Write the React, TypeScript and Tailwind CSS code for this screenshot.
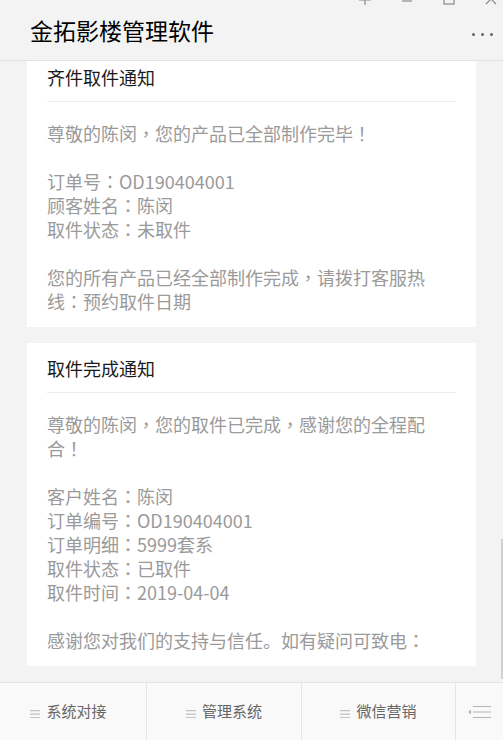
import type { ReactNode } from 'react';

const FONT = { fontFamily: '"Microsoft YaHei", "Noto Sans CJK SC", sans-serif' };

/** Full-width punctuation sits centred in the reference, so borrow the TC glyphs for it. */
function withPunct(text: string) {
  return text.split(/([：，！])/).map((part, i) =>
    /^[：，！]$/.test(part) ? (
      <span key={i} className="font-['Noto_Sans_CJK_TC',sans-serif]">
        {part}
      </span>
    ) : (
      part
    ),
  );
}

interface NoticeCardProps {
  title: string;
  lines: string[];
  className?: string;
}

/** White notification card: title, hairline divider, grey body lines ('' = blank line). */
function NoticeCard({ title, lines, className = '' }: NoticeCardProps) {
  return (
    <div className={`mx-[27px] bg-white px-5 pb-[14px] ${className}`}>
      <div className="flex h-[50px] items-center border-b border-[#ececec] pt-[2px] text-[18px] text-[#1a1a1a]">
        {title}
      </div>
      <div className="w-[392px] pt-[19px] text-[18px] leading-6 text-[#9a9a9a]">
        {lines.map((line, i) => (
          <p key={i} className="min-h-6">
            {withPunct(line)}
          </p>
        ))}
      </div>
    </div>
  );
}

function MenuGlyph() {
  return (
    <svg width="10" height="9" viewBox="0 0 10 9" className="mr-[6px] mt-[3px]">
      <rect x="0" y="1" width="10" height="1.3" fill="#c4c4c4" />
      <rect x="0" y="4.5" width="10" height="1.3" fill="#c4c4c4" />
      <rect x="0" y="8" width="10" height="1" fill="#c4c4c4" />
    </svg>
  );
}

function NavItem({ className, children }: { className: string; children: ReactNode }) {
  return (
    <div className={`flex items-center justify-center border-r border-[#e4e4e4] text-[15px] text-[#666] ${className}`}>
      {children}
    </div>
  );
}

export default function App() {
  return (
    <div style={FONT} className="relative flex h-[740px] w-[503px] flex-col overflow-hidden bg-[#f3f3f3]">
      {/* window controls, clipped by the top edge */}
      <div className="absolute right-[6px] top-[-9px] flex items-center gap-[30px] text-[#8a8a8a]">
        <svg width="12" height="14" viewBox="0 0 12 14" fill="none" stroke="currentColor" strokeWidth="1.2">
          <path d="M3 1h6M4 1v5L1 9h10L8 6V1M6 9v5" />
        </svg>
        <svg width="12" height="14" viewBox="0 0 12 14" stroke="currentColor" strokeWidth="1.2">
          <path d="M1 10h10" />
        </svg>
        <svg width="12" height="14" viewBox="0 0 12 14" fill="none" stroke="currentColor" strokeWidth="1.2">
          <rect x="1" y="3" width="10" height="10" />
        </svg>
        <svg width="12" height="14" viewBox="0 0 12 14" fill="none" stroke="currentColor" strokeWidth="1.2">
          <path d="M1 3l10 10M11 3L1 13" />
        </svg>
      </div>

      <header className="flex h-[61px] shrink-0 items-center justify-between border-b border-[#e2e2e2] pl-[30px] pr-[10px]">
        <h1 className="text-[23px] leading-none text-black">金拓影楼管理软件</h1>
        <div className="mt-[8px] flex gap-[6px]">
          <span className="h-[3px] w-[3px] rounded-full bg-[#666]" />
          <span className="h-[3px] w-[3px] rounded-full bg-[#666]" />
          <span className="h-[3px] w-[3px] rounded-full bg-[#666]" />
        </div>
      </header>

      <main className="relative flex-1 overflow-hidden">
        <NoticeCard
          className="-mt-[9px]"
          title="齐件取件通知"
          lines={[
            '尊敬的陈闵，您的产品已全部制作完毕！',
            '',
            '订单号：OD190404001',
            '顾客姓名：陈闵',
            '取件状态：未取件',
            '',
            '您的所有产品已经全部制作完成，请拨打客服热线：预约取件日期',
          ]}
        />
        <NoticeCard
          className="mt-4"
          title="取件完成通知"
          lines={[
            '尊敬的陈闵，您的取件已完成，感谢您的全程配合！',
            '',
            '客户姓名：陈闵',
            '订单编号：OD190404001',
            '订单明细：5999套系',
            '取件状态：已取件',
            '取件时间：2019-04-04',
            '',
            '感谢您对我们的支持与信任。如有疑问可致电：',
          ]}
        />
        {/* scrollbar thumb */}
        <div className="absolute right-0 top-[478px] h-[140px] w-[2px] bg-[#d0d0d0]" />
      </main>

      <nav className="flex h-[58px] shrink-0 border-t border-[#e4e4e4] bg-[#f9f9f9]">
        <NavItem className="w-[147px] pr-[9px]">
          <MenuGlyph />
          系统对接
        </NavItem>
        <NavItem className="w-[155px]">
          <MenuGlyph />
          管理系统
        </NavItem>
        <NavItem className="w-[154px]">
          <MenuGlyph />
          微信营销
        </NavItem>
        <div className="flex flex-1 items-center justify-center">
          <svg width="24" height="14" viewBox="0 0 24 14">
            <path d="M0 7l3-2.5v5z" fill="#b5b5b5" />
            <rect x="5" y="1" width="18" height="1" fill="#b5b5b5" />
            <rect x="5" y="6.5" width="18" height="1" fill="#b5b5b5" />
            <rect x="5" y="12" width="18" height="1" fill="#b5b5b5" />
          </svg>
        </div>
      </nav>
    </div>
  );
}
